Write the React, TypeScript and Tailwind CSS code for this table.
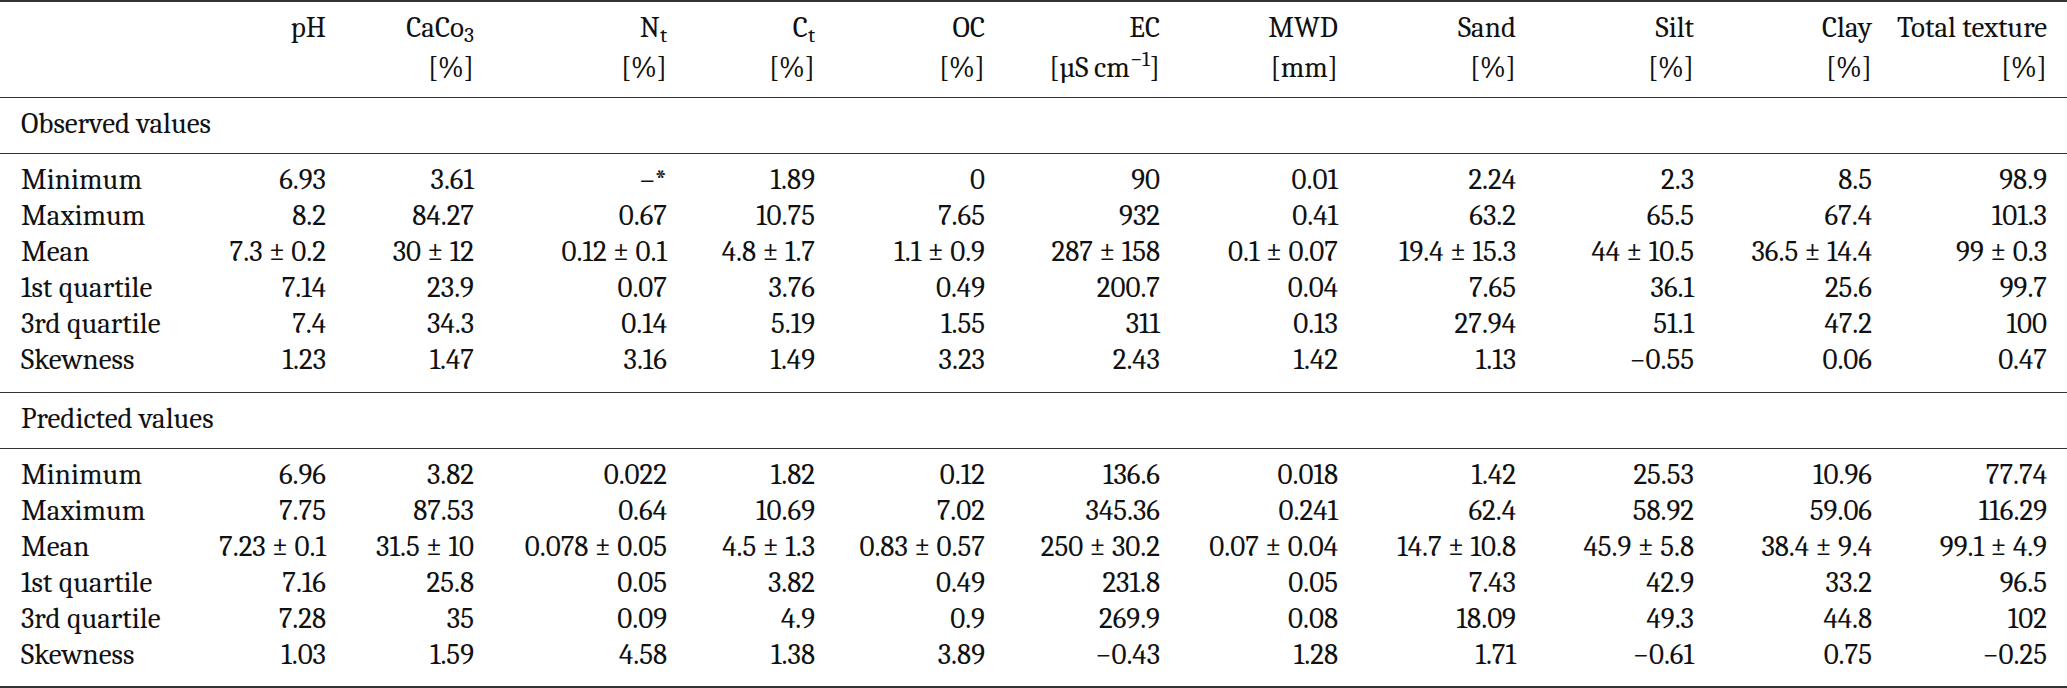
import React from "react";

type Cell = React.ReactNode;

const COLS =
  "grid grid-cols-[159px_146px_148px_193px_148px_170px_175px_178px_178px_178px_178px_175px]";

const PCT = "\u005B%\u005D";

const HEAD_1: Cell[] = [
  "",
  "pH",
  <>
    {"CaCo"}
    <sub>3</sub>
  </>,
  <>
    {"N"}
    <sub>t</sub>
  </>,
  <>
    {"C"}
    <sub>t</sub>
  </>,
  "OC",
  "EC",
  "MWD",
  "Sand",
  "Silt",
  "Clay",
  "Total texture",
];

const HEAD_2: Cell[] = [
  "",
  "",
  PCT,
  PCT,
  PCT,
  PCT,
  <>
    {"\u005BµS\u2009cm"}
    <sup>{"−1"}</sup>
    {"\u005D"}
  </>,
  "\u005Bmm\u005D",
  PCT,
  PCT,
  PCT,
  PCT,
];

const OBSERVED: Array<Array<string>> = [
  ["Minimum", "6.93", "3.61", "–*", "1.89", "0", "90", "0.01", "2.24", "2.3", "8.5", "98.9"],
  ["Maximum", "8.2", "84.27", "0.67", "10.75", "7.65", "932", "0.41", "63.2", "65.5", "67.4", "101.3"],
  ["Mean", "7.3 ± 0.2", "30 ± 12", "0.12 ± 0.1", "4.8 ± 1.7", "1.1 ± 0.9", "287 ± 158", "0.1 ± 0.07", "19.4 ± 15.3", "44 ± 10.5", "36.5 ± 14.4", "99 ± 0.3"],
  ["1st quartile", "7.14", "23.9", "0.07", "3.76", "0.49", "200.7", "0.04", "7.65", "36.1", "25.6", "99.7"],
  ["3rd quartile", "7.4", "34.3", "0.14", "5.19", "1.55", "311", "0.13", "27.94", "51.1", "47.2", "100"],
  ["Skewness", "1.23", "1.47", "3.16", "1.49", "3.23", "2.43", "1.42", "1.13", "−0.55", "0.06", "0.47"],
];

const PREDICTED: Array<Array<string>> = [
  ["Minimum", "6.96", "3.82", "0.022", "1.82", "0.12", "136.6", "0.018", "1.42", "25.53", "10.96", "77.74"],
  ["Maximum", "7.75", "87.53", "0.64", "10.69", "7.02", "345.36", "0.241", "62.4", "58.92", "59.06", "116.29"],
  ["Mean", "7.23 ± 0.1", "31.5 ± 10", "0.078 ± 0.05", "4.5 ± 1.3", "0.83 ± 0.57", "250 ± 30.2", "0.07 ± 0.04", "14.7 ± 10.8", "45.9 ± 5.8", "38.4 ± 9.4", "99.1 ± 4.9"],
  ["1st quartile", "7.16", "25.8", "0.05", "3.82", "0.49", "231.8", "0.05", "7.43", "42.9", "33.2", "96.5"],
  ["3rd quartile", "7.28", "35", "0.09", "4.9", "0.9", "269.9", "0.08", "18.09", "49.3", "44.8", "102"],
  ["Skewness", "1.03", "1.59", "4.58", "1.38", "3.89", "−0.43", "1.28", "1.71", "−0.61", "0.75", "−0.25"],
];

function Row({ cells, lead }: { cells: Cell[]; lead: string }) {
  return (
    <div className={`${COLS} ${lead}`}>
      {cells.map((c, i) => (
        <div key={i} className={i === 0 ? "text-left whitespace-nowrap" : "text-right whitespace-nowrap"}>
          {c}
        </div>
      ))}
    </div>
  );
}

function Block({ rows, last }: { rows: Array<Array<string>>; last?: boolean }) {
  return (
    <div className={last ? "pt-[8px] pb-[13px] pl-[21px] pr-[20px]" : "pt-[8px] pb-[14px] pl-[21px] pr-[20px]"}>
      {rows.map((r) => (
        <Row key={r[0]} cells={r} lead="leading-[36px]" />
      ))}
    </div>
  );
}

function Section({ title }: { title: string }) {
  return (
    <div className="pt-[8px] pb-[11px] pl-[21px] pr-[20px] leading-[36px] border-b border-[#333]">
      {title}
    </div>
  );
}

export default function App() {
  return (
    <div className="font-serif w-[2067px] bg-white text-[#111] text-[29px]">
      <div className="border-t-2 border-b border-[#333] pt-[6px] pb-[9px] pl-[21px] pr-[20px]">
        <Row cells={HEAD_1} lead="leading-[40px]" />
        <Row cells={HEAD_2} lead="leading-[40px]" />
      </div>

      <Section title="Observed values" />
      <div className="border-b border-[#333]">
        <Block rows={OBSERVED} />
      </div>

      <Section title="Predicted values" />
      <div className="border-b-2 border-[#333]">
        <Block rows={PREDICTED} last />
      </div>
    </div>
  );
}
